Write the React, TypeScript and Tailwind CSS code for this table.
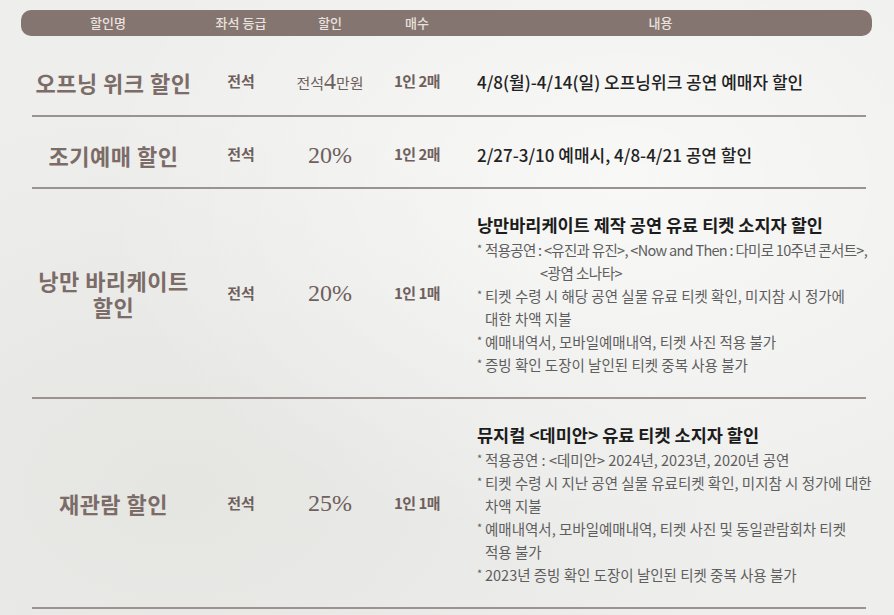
import type { ReactNode } from "react";

const sans = "font-['Noto_Sans_CJK_KR','Noto_Sans',sans-serif]";
const serif = "font-['Liberation_Serif','Noto_Sans_CJK_KR',serif]";

type Row = {
  name: ReactNode;
  discount: ReactNode;
  limit: string;
  box: string;
  content: ReactNode;
};

function Bullet({ children, className = "" }: { children: ReactNode; className?: string }) {
  return (
    <div className={`flex whitespace-nowrap ${className}`}>
      <span className="w-[8px] shrink-0 text-[11px] leading-[20px]">*</span>
      <span>{children}</span>
    </div>
  );
}

const rows: Row[] = [
  {
    name: "오프닝 위크 할인",
    discount: (
      <span className="text-[15px]">
        전석<span className={`${serif} text-[24px] leading-none`}>4</span>만원
      </span>
    ),
    limit: "1인 2매",
    box: "h-[81px] pt-[12px]",
    content: <p className="text-[17px] font-medium text-[#222]">4/8(월)-4/14(일) 오프닝위크 공연 예매자 할인</p>,
  },
  {
    name: "조기예매 할인",
    discount: <span className={`${serif} text-[24px]`}>20%</span>,
    limit: "1인 2매",
    box: "h-[72px] pt-[5px]",
    content: <p className="text-[17px] font-medium text-[#222]">2/27-3/10 예매시, 4/8-4/21 공연 할인</p>,
  },
  {
    name: (
      <>
        낭만 바리케이트
        <br />
        할인
      </>
    ),
    discount: <span className={`${serif} text-[24px]`}>20%</span>,
    limit: "1인 1매",
    box: "h-[210px]",
    content: (
      <div>
        <p className="text-[17.5px] font-bold leading-[27px] text-[#1c1c1c]">낭만바리케이트 제작 공연 유료 티켓 소지자 할인</p>
        <div className="text-[14.5px] leading-[23px] text-[#5e5e5e]">
          <Bullet className="tracking-[-0.7px]">적용공연 : &lt;유진과 유진&gt;, &lt;Now and Then : 다미로 10주년 콘서트&gt;,</Bullet>
          <div className="whitespace-nowrap pl-[63px] tracking-[-0.5px]">&lt;광염 소나타&gt;</div>
          <Bullet>
            티켓 수령 시 해당 공연 실물 유료 티켓 확인, 미지참 시 정가에
            <br />
            대한 차액 지불
          </Bullet>
          <Bullet>예매내역서, 모바일예매내역, 티켓 사진 적용 불가</Bullet>
          <Bullet>증빙 확인 도장이 날인된 티켓 중복 사용 불가</Bullet>
        </div>
      </div>
    ),
  },
  {
    name: "재관람 할인",
    discount: <span className={`${serif} text-[24px]`}>25%</span>,
    limit: "1인 1매",
    box: "h-[210px]",
    content: (
      <div>
        <p className="text-[17.5px] font-bold leading-[27px] text-[#1c1c1c]">뮤지컬 &lt;데미안&gt; 유료 티켓 소지자 할인</p>
        <div className="text-[14.5px] leading-[23px] text-[#5e5e5e]">
          <Bullet>적용공연 : &lt;데미안&gt; 2024년, 2023년, 2020년 공연</Bullet>
          <Bullet>
            티켓 수령 시 지난 공연 실물 유료티켓 확인, 미지참 시 정가에 대한
            <br />
            차액 지불
          </Bullet>
          <Bullet>
            예매내역서, 모바일예매내역, 티켓 사진 및 동일관람회차 티켓
            <br />
            적용 불가
          </Bullet>
          <Bullet>2023년 증빙 확인 도장이 날인된 티켓 중복 사용 불가</Bullet>
        </div>
      </div>
    ),
  },
];

export default function App() {
  return (
    <div
      className={`${sans} relative h-[615px] w-[894px] overflow-hidden bg-[#eeeeec] pt-[10px]`}
      style={{
        backgroundImage:
          "radial-gradient(ellipse at 70% 30%, rgba(255,255,255,0.6), transparent 60%), radial-gradient(ellipse at 20% 80%, rgba(225,225,222,0.7), transparent 55%)",
      }}
    >
      <div className="ml-[21px] w-[851px]">
        <div className="grid h-[26px] grid-cols-[174px_92px_86px_88px_1fr] items-center rounded-[10px] bg-[#857570] text-center text-[13px] font-medium text-[#e9e2df]">
          <span>할인명</span>
          <span>좌석 등급</span>
          <span>할인</span>
          <span>매수</span>
          <span className="pr-[12px]">내용</span>
        </div>

        <div className="ml-[11px] w-[834px]">
          {rows.map((row, i) => (
            <div
              key={i}
              className={`grid ${row.box} grid-cols-[163px_92px_86px_88px_1fr] items-center border-b-2 border-[#9c9391]`}
            >
              <div className="text-center text-[22px] font-bold leading-[26px] tracking-[0.5px] text-[#7b6c68]">
                {row.name}
              </div>
              <div className="text-center text-[15px] font-semibold text-[#6e605c]">전석</div>
              <div className="text-center text-[#6e605c]">{row.discount}</div>
              <div className="text-center text-[15px] font-semibold tracking-[-0.5px] text-[#6e605c]">{row.limit}</div>
              <div className="pl-[16px]">{row.content}</div>
            </div>
          ))}
        </div>
      </div>
    </div>
  );
}
